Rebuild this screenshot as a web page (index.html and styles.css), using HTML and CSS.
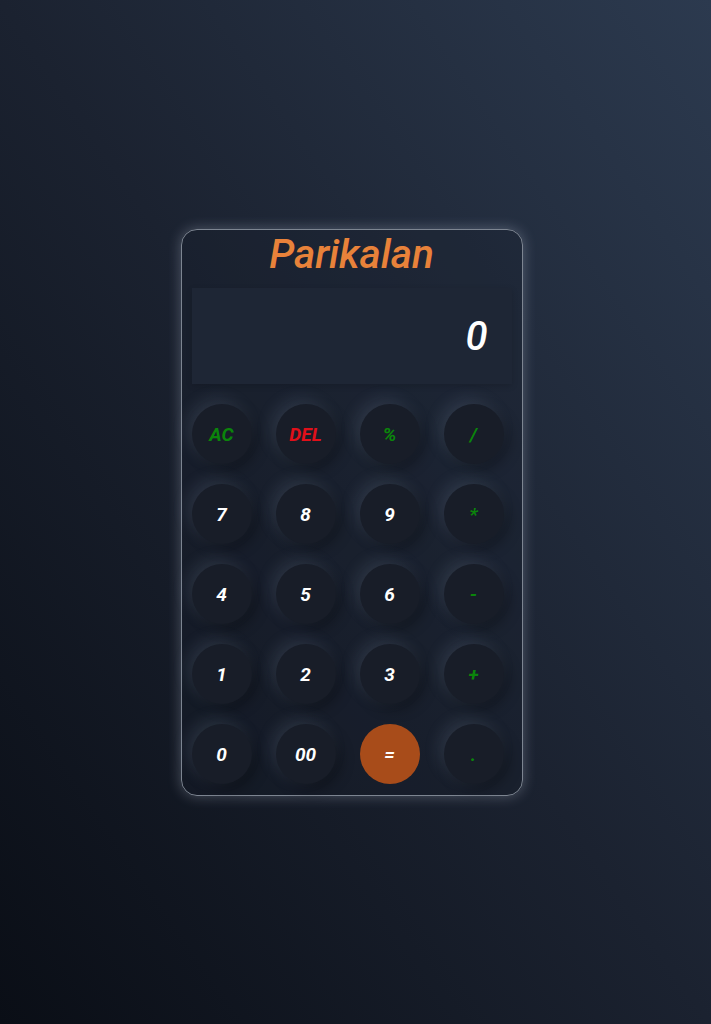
FILE: index.html
```html
<!DOCTYPE html>
<html>
<head>
<meta charset="utf-8">
<link rel="stylesheet" href="styles.css">
</head>
<body>
<main class="page">
  <div class="calc">
    <h1 class="title">Parikalan</h1>
    <div class="display"><span class="value">0</span></div>
    <div class="keys">
      <button class="key op">AC</button>
      <button class="key del">DEL</button>
      <button class="key op">%</button>
      <button class="key op">/</button>
      <button class="key">7</button>
      <button class="key">8</button>
      <button class="key">9</button>
      <button class="key op">*</button>
      <button class="key">4</button>
      <button class="key">5</button>
      <button class="key">6</button>
      <button class="key op">-</button>
      <button class="key">1</button>
      <button class="key">2</button>
      <button class="key">3</button>
      <button class="key op">+</button>
      <button class="key">0</button>
      <button class="key">00</button>
      <button class="key eq">=</button>
      <button class="key op">.</button>
    </div>
  </div>
</main>
</body>
</html>
```

FILE: styles.css
```css
* { box-sizing: border-box; }
html, body { margin: 0; height: 100%; }
body {
  background: linear-gradient(to top right, #0a0e16 0%, #1b2230 50%, #2c3a4f 100%);
  font-family: Roboto, "Noto Sans", sans-serif;
}
.page {
  height: 1024px;
  display: flex;
  justify-content: center;
  align-items: flex-start;
  padding-top: 229px;
  padding-right: 8px;
}
.calc {
  width: 342px;
  padding: 0 10px 11px;
  border: 1px solid #7d8591;
  border-radius: 16px;
  background: rgba(24, 30, 42, 0.3);
  box-shadow: 0 0 14px rgba(210, 220, 240, 0.3);
  display: flex;
  flex-direction: column;
  align-items: stretch;
}
.title {
  margin: 0;
  height: 58px;
  padding-top: 1px;
  text-align: center;
  font-style: italic;
  font-weight: 500;
  font-size: 40.5px;
  line-height: 46px;
  color: #e8823a;
}
.display {
  height: 96px;
  background: #1e2635;
  display: flex;
  align-items: center;
  justify-content: flex-end;
  padding-right: 24px;
  box-shadow: 0 2px 6px rgba(0,0,0,0.15);
}
.value {
  font-style: italic;
  font-weight: 500;
  font-size: 40px;
  color: #ffffff;
}
.keys {
  margin-top: 20px;
  display: grid;
  grid-template-columns: repeat(4, 60px);
  column-gap: 24px;
  row-gap: 20px;
}
.key {
  width: 60px;
  height: 60px;
  border: none;
  border-radius: 50%;
  background: #181d28;
  color: #ffffff;
  font-family: Roboto, "Noto Sans", sans-serif;
  font-style: italic;
  font-weight: 700;
  font-size: 19px;
  padding: 0;
  box-shadow: -5px -5px 16px rgba(150, 165, 195, 0.16), 5px 5px 14px rgba(0, 0, 0, 0.3);
}
.key.op { color: #0b850b; }
.key.del { color: #e0101a; }
.key.eq { background: #a84c1a; box-shadow: none; }
```
